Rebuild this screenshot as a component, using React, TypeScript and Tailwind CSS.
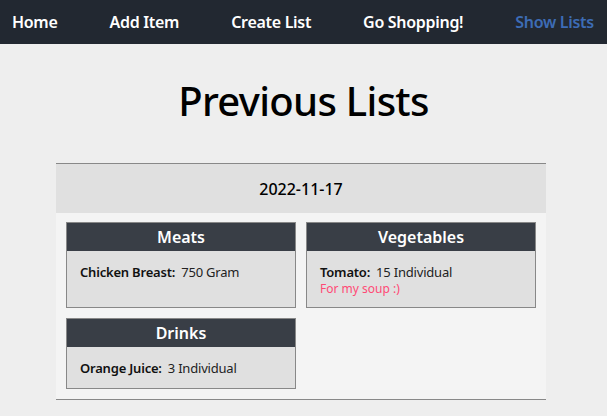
import React from "react"

type Item = {
  name: string
  amount: string
  note?: string
}

type Category = {
  title: string
  items: Item[]
}

const navLinks = [
  { label: "Home", active: false },
  { label: "Add Item", active: false },
  { label: "Create List", active: false },
  { label: "Go Shopping!", active: false },
  { label: "Show Lists", active: true },
]

const categories: Category[] = [
  { title: "Meats", items: [{ name: "Chicken Breast", amount: "750 Gram" }] },
  {
    title: "Vegetables",
    items: [{ name: "Tomato", amount: "15 Individual", note: "For my soup :)" }],
  },
  { title: "Drinks", items: [{ name: "Orange Juice", amount: "3 Individual" }] },
]

function CategoryCard({ category }: { category: Category }) {
  return (
    <div className="border border-[#888888] bg-[#e0e0e0] flex flex-col">
      <div className="h-[28px] bg-[#393e46] text-white flex items-center justify-center text-[16px] font-semibold">
        {category.title}
      </div>
      <div className="pl-[13px] pr-3 pt-[12px] pb-[11px]">
        {category.items.map((item) => (
          <div key={item.name}>
            <div className="text-[13px] leading-[18px] text-[#111] tracking-[-0.2px]">
              <span className="font-semibold">{item.name}:</span>
              <span className="ml-[6px] text-[#222]">{item.amount}</span>
            </div>
            {item.note && (
              <div className="text-[12px] leading-[15px] text-[#ff4a75]">{item.note}</div>
            )}
          </div>
        ))}
      </div>
    </div>
  )
}

export default function App() {
  return (
    <div className="min-h-[416px] bg-[#eeeeee] font-['Noto_Sans',sans-serif] overflow-hidden">
      <nav className="h-[44px] bg-[#222831] flex items-center pl-[12px] gap-[52px]">
        {navLinks.map((link) => (
          <a
            key={link.label}
            className={
              link.active
                ? "text-[16px] font-semibold text-[#3d6cb5] tracking-[-0.3px]"
                : "text-[16px] font-semibold text-white tracking-[-0.3px]"
            }
          >
            {link.label}
          </a>
        ))}
      </nav>

      <h1 className="text-center text-[40px] font-medium text-black leading-[48px] mt-[33px] mb-[38px] tracking-[-0.7px]">
        Previous Lists
      </h1>

      <div className="w-[490px] ml-[56px] border-y border-[#888888]">
        <div className="h-[49px] bg-[#e0e0e0] flex items-center justify-center text-[16px] font-medium text-black">
          2022-11-17
        </div>
        <div className="bg-[#f4f4f4] p-[10px] pt-[9px] grid grid-cols-2 gap-[10px]">
          {categories.map((c) => (
            <CategoryCard key={c.title} category={c} />
          ))}
        </div>
      </div>
    </div>
  )
}
